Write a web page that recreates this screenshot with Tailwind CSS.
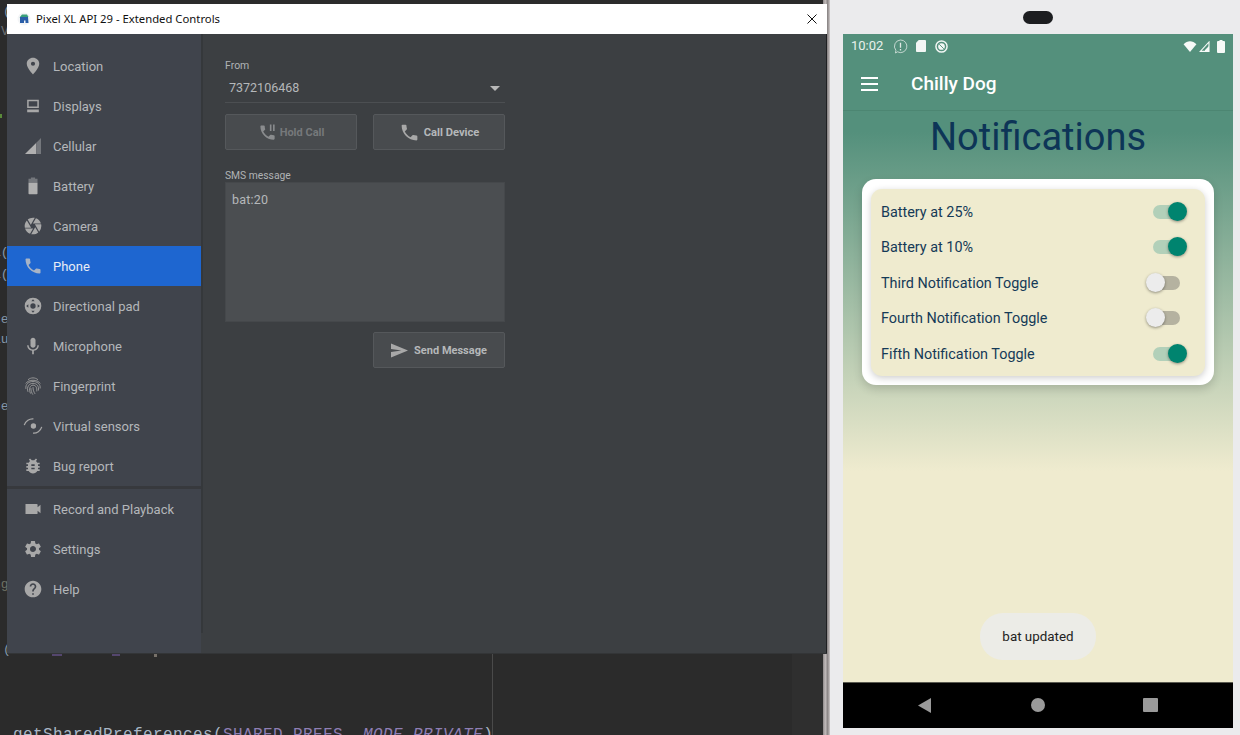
<!DOCTYPE html>
<html>
<head>
<meta charset="utf-8">
<script src="https://cdn.jsdelivr.net/npm/@tailwindcss/browser@4"></script>
</head>
<body class="w-[1240px] h-[735px] overflow-hidden bg-[#2b2b2b] relative font-['Roboto',sans-serif]">
<!-- IDE behind -->
<div class="absolute left-[13px] top-[725px] text-[16px] leading-[20px] tracking-[0.4px] font-['Liberation_Mono',monospace] text-[#a9b7c6] whitespace-nowrap">getSharedPreferences(<span class="text-[#8f7fb5]">SHARED_PREFS</span>, <span class="italic text-[#8f7fb5]">MODE_PRIVATE</span>)</div>
<div class="absolute left-[-3px] top-0 w-[40px] h-[735px] font-['Liberation_Mono',monospace] text-[13px] leading-[18px] text-[#8496a8]">
  <span class="absolute left-[6px] top-[3px]">(</span>
  <span class="absolute left-[4px] top-[23px] text-[#6b6f73]">V</span>
  <span class="absolute left-[-4px] top-[244px]"><span class="text-[#b8b8a8]">l</span>(</span>
  <span class="absolute left-[-4px] top-[266px]"><span class="text-[#b8b8a8]">l</span>(</span>
  <span class="absolute left-[-4px] top-[311px]"><span class="text-[#a08a6a]">c</span>e</span>
  <span class="absolute left-[-4px] top-[331px]"><span class="text-[#b8b8a8]">l</span>u</span>
  <span class="absolute left-[-4px] top-[398px]"><span class="text-[#a08a6a]">c</span>e</span>
  <span class="absolute left-[-4px] top-[576px] text-[#6f7266]">ng</span>
  <span class="absolute left-[6px] top-[641px]">(</span>
</div>
<div class="absolute left-0 top-[114px] w-[2px] h-[4px] bg-[#5a8a3a]"></div>
<div class="absolute left-[52px] top-[654px] w-[10px] h-[2px] bg-[#54466e]"></div>
<div class="absolute left-[112px] top-[654px] w-[8px] h-[2px] bg-[#54466e]"></div>
<div class="absolute left-[154px] top-[654px] w-[3px] h-[3px] bg-[#77716a]"></div>
<div class="absolute left-[492px] top-[654px] w-px h-[81px] bg-[#4a4a4a]"></div>
<div class="absolute left-[792px] top-[654px] w-[31px] h-[81px] bg-[#2f2f2f]"></div>
<div class="absolute left-[823px] top-0 w-[7px] h-[735px] bg-[linear-gradient(to_right,#8f8a8a,#c0baba,#8a8585,#cfcaca)]"></div>

<!-- Extended controls window -->
<div class="absolute left-[7px] top-[4px] w-[820px] h-[650px] flex flex-col bg-[#3c3f42] border-b border-b-[#333537]">
  <div class="h-[30px] shrink-0 bg-white flex items-center pl-[10px] pr-[10px] text-[11.3px] text-[#111]">
    <svg class="w-[14px] h-[14px] mr-[5px]" viewBox="0 0 14 14"><circle cx="7" cy="7" r="6.500" fill="#f3f5f7"/><path d="M2.500 5.500 5 2.500h5l1.500 2.500z" fill="#3aa07a"/><path d="M3 5h8l.5 6h-3V8.500h-1.500V11H3z" fill="#2a5ea8"/></svg>
    <span class="font-['Noto_Sans',sans-serif]">Pixel XL API 29 - Extended Controls</span>
    <svg class="ml-auto w-[10px] h-[10px]" viewBox="0 0 10 10"><path d="M.500.500 9.500 9.500M9.500.500 .500 9.500" stroke="#111" stroke-width="1"/></svg>
  </div>
  <div class="flex flex-1 min-h-0 border-r border-r-[#1f2022]">
    <aside class="w-[194px] shrink-0 bg-[#40444c] pt-[12px] text-[13px] text-[#b4b7ba] flex flex-col">
      <div class="h-[40px] flex items-center">
        <svg class="w-[20px] h-[20px] ml-[16px] mr-[10px]" viewBox="0 0 24 24" fill="#a8a8a8"><path d="M12 2C8.100 2 4.500 5.100 4.500 9.200 4.500 14.500 12 22 12 22s7.500-7.500 7.500-12.800C19.500 5.100 15.900 2 12 2zm0 9.800a2.500 2.500 0 1 1 0-5 2.500 2.500 0 0 1 0 5z"/></svg>
        <span class="pt-[2px]">Location</span></div>
      <div class="h-[40px] flex items-center">
        <svg class="w-[20px] h-[20px] ml-[16px] mr-[10px]" viewBox="0 0 24 24" fill="#a8a8a8"><path fill-rule="evenodd" d="M5 4.500h14v10H5zM6.800 6.300v6.400h10.400V6.300z"/><path d="M5 16.200h14v3.300H5z"/></svg>
        <span class="pt-[2px]">Displays</span></div>
      <div class="h-[40px] flex items-center">
        <svg class="w-[20px] h-[20px] ml-[16px] mr-[10px]" viewBox="0 0 24 24"><path d="M2.400 21.600 16 8v13.600z" fill="#b0b0b0"/><path d="M16 8l5.600-5.600v19.200H16z" fill="#74777c"/></svg>
        <span class="pt-[2px]">Cellular</span></div>
      <div class="h-[40px] flex items-center">
        <svg class="w-[20px] h-[20px] ml-[16px] mr-[10px]" viewBox="0 0 24 24"><path d="M9.500 1.800h5v1.500h2.900v4.700H6.600V3.300h2.900z" fill="#74777c"/><path d="M6.600 8h10.800v13a1 1 0 0 1-1 1H7.600a1 1 0 0 1-1-1z" fill="#b0b0b0"/></svg>
        <span class="pt-[2px]">Battery</span></div>
      <div class="h-[40px] flex items-center">
        <svg class="w-[20px] h-[20px] ml-[16px] mr-[10px]" viewBox="0 0 24 24" fill="#a8a8a8"><path d="M9.400 10.500l4.770-8.260A10 10 0 0 0 12 2c-2.400 0-4.600.85-6.320 2.260l3.660 6.340.06-.1zM21.540 9c-.92-2.920-3.150-5.260-6-6.340L11.880 9h9.660zm.26 1h-7.490l.29.500 4.760 8.250A9.900 9.900 0 0 0 22 12c0-.69-.07-1.350-.2-2zM8.540 12l-3.900-6.750A9.960 9.960 0 0 0 2.200 14h7.490l-1.150-2zm-6.080 3c.92 2.920 3.150 5.260 6 6.340L12.120 15H2.460zm11.270 0l-3.900 6.760A10 10 0 0 0 12 22c2.400 0 4.600-.85 6.320-2.260l-3.660-6.340-.93 1.600z"/></svg>
        <span class="pt-[2px]">Camera</span></div>
      <div class="h-[40px] flex items-center bg-[#1e66d0] text-[#e8edf5]">
        <svg class="w-[20px] h-[20px] ml-[16px] mr-[10px]" viewBox="0 0 24 24" fill="#a8b4c6"><path d="M6.620 10.790c1.440 2.830 3.760 5.140 6.590 6.590l2.200-2.200c.27-.27.67-.36 1.020-.24 1.120.37 2.330.57 3.570.57.550 0 1 .45 1 1V20c0 .550-.45 1-1 1C10.610 21 3 13.390 3 4c0-.550.45-1 1-1h3.500c.550 0 1 .45 1 1 0 1.250.2 2.450.57 3.570.11.350.03.740-.25 1.020l-2.200 2.200z"/></svg>
        <span class="pt-[2px]">Phone</span></div>
      <div class="h-[40px] flex items-center">
        <svg class="w-[20px] h-[20px] ml-[16px] mr-[10px]" viewBox="0 0 24 24"><circle cx="12" cy="12" r="10" fill="#a8a8a8"/><circle cx="12" cy="12" r="3.200" fill="#40444c"/><path d="M12 3.800l2 2.600h-4zM12 20.200l2-2.600h-4zM3.800 12l2.600-2v4zM20.200 12l-2.600-2v4z" fill="#40444c"/></svg>
        <span class="pt-[2px]">Directional pad</span></div>
      <div class="h-[40px] flex items-center">
        <svg class="w-[20px] h-[20px] ml-[16px] mr-[10px]" viewBox="0 0 24 24" fill="#a8a8a8"><path d="M12 14c1.660 0 3-1.340 3-3V5c0-1.660-1.340-3-3-3S9 3.340 9 5v6c0 1.660 1.340 3 3 3z"/><path d="M17.300 11c0 3-2.540 5.100-5.300 5.100S6.700 14 6.700 11H5c0 3.420 2.720 6.230 6 6.720V22h2v-4.280c3.280-.48 6-3.300 6-6.720h-1.700z"/></svg>
        <span class="pt-[2px]">Microphone</span></div>
      <div class="h-[40px] flex items-center">
        <svg class="w-[20px] h-[20px] ml-[16px] mr-[10px]" viewBox="0 0 24 24" fill="none" stroke="#9a9a9a" stroke-width="1.100"><path d="M6 4.500C9.500 1.500 14.500 1.500 18 4.500M3.300 9C6.500 3.800 17.500 3.800 20.700 9M3.500 15.500C2.500 9.500 7.500 6.500 12 6.500s9.500 3 8.500 8.500M6 19C4 13 7.500 8.800 12 8.800s7.500 3.500 6.500 8.700M9 21C6.500 15.500 8.500 11 12 11s5 3 4.500 7.500M12 13.300c0 3.200 1 6 2.500 8.200M9.500 14.500c0 3 .8 5.800 2.300 7.800"/></svg>
        <span class="pt-[2px]">Fingerprint</span></div>
      <div class="h-[40px] flex items-center">
        <svg class="w-[20px] h-[20px] ml-[16px] mr-[10px]" viewBox="0 0 24 24" fill="none" stroke="#a8a8a8" stroke-width="1.500"><circle cx="12.500" cy="12" r="3.200" fill="#a8a8a8" stroke="none"/><path d="M1.500 11C3 6 8 3 12.500 3.500M22.500 13C21 18 16.500 21 12 20.500"/></svg>
        <span class="pt-[2px]">Virtual sensors</span></div>
      <div class="h-[40px] flex items-center">
        <svg class="w-[20px] h-[20px] ml-[16px] mr-[10px]" viewBox="0 0 24 24" fill="#a8a8a8"><path d="M20 8h-2.810c-.45-.78-1.070-1.450-1.820-1.960L17 4.410 15.590 3l-2.170 2.170a6 6 0 0 0-2.830 0L8.410 3 7 4.410l1.620 1.630C7.880 6.550 7.260 7.220 6.810 8H4v2h2.090c-.05.330-.09.660-.09 1v1H4v2h2v1c0 .340.040.670.09 1H4v2h2.810c1.040 1.790 2.970 3 5.190 3s4.150-1.210 5.190-3H20v-2h-2.090c.05-.33.090-.66.090-1v-1h2v-2h-2v-1c0-.340-.04-.67-.09-1H20V8zm-6 8h-4v-2h4v2zm0-4h-4v-2h4v2z"/></svg>
        <span class="pt-[2px]">Bug report</span></div>
      <div class="h-[3px] bg-[#37393d] shrink-0"></div>
      <div class="h-[40px] flex items-center">
        <svg class="w-[20px] h-[20px] ml-[16px] mr-[10px]" viewBox="0 0 24 24" fill="#a8a8a8"><path d="M3 6h13.500a1 1 0 0 1 1 1v3l3.500-3v10l-3.500-3v3a1 1 0 0 1-1 1H3z"/></svg>
        <span class="pt-[2px]">Record and Playback</span></div>
      <div class="h-[40px] flex items-center">
        <svg class="w-[20px] h-[20px] ml-[16px] mr-[10px]" viewBox="0 0 24 24" fill="#a8a8a8"><path d="M19.140 12.940c.04-.3.060-.61.060-.94 0-.32-.02-.64-.07-.94l2.030-1.580a.490.490 0 0 0 .12-.61l-1.920-3.320a.488.488 0 0 0-.59-.22l-2.390.96c-.5-.38-1.030-.7-1.620-.94l-.36-2.540a.484.484 0 0 0-.48-.41h-3.840c-.24 0-.43.170-.47.410l-.36 2.540c-.59.240-1.130.57-1.620.94l-2.390-.96c-.22-.08-.47 0-.59.220L2.740 8.870c-.12.210-.08.470.12.610l2.030 1.580c-.05.300-.09.630-.09.940s.02.640.07.940l-2.030 1.580a.490.490 0 0 0-.12.610l1.920 3.320c.12.220.37.290.59.220l2.390-.96c.5.380 1.030.7 1.620.94l.36 2.540c.05.240.24.410.48.410h3.840c.24 0 .44-.17.470-.41l.36-2.540c.59-.24 1.130-.56 1.620-.94l2.390.96c.22.080.47 0 .59-.22l1.920-3.320c.12-.22.070-.47-.12-.61l-2.010-1.580zM12 15.600A3.610 3.610 0 0 1 8.400 12c0-1.980 1.620-3.600 3.600-3.600s3.600 1.620 3.600 3.600-1.620 3.600-3.600 3.600z"/></svg>
        <span class="pt-[2px]">Settings</span></div>
      <div class="h-[40px] flex items-center">
        <svg class="w-[20px] h-[20px] ml-[16px] mr-[10px]" viewBox="0 0 24 24" fill="#a8a8a8"><path d="M12 2C6.480 2 2 6.480 2 12s4.480 10 10 10 10-4.480 10-10S17.520 2 12 2zm1 17h-2v-2h2v2zm2.070-7.750l-.9.920C13.450 12.900 13 13.500 13 15h-2v-.5c0-1.100.45-2.100 1.170-2.830l1.240-1.260c.37-.36.590-.86.590-1.410 0-1.100-.9-2-2-2s-2 .9-2 2H8c0-2.210 1.790-4 4-4s4 1.790 4 4c0 .88-.36 1.680-.93 2.250z"/></svg>
        <span class="pt-[2px]">Help</span></div>
    </aside>
    <div class="w-[2px] h-[599px] shrink-0 bg-[#35383b]"></div>
    <main class="flex-1 pl-[22px] pt-[26px] text-[#b5b8ba]">
      <div class="w-[280px] flex flex-col">
        <div class="text-[10.5px] leading-[12px] text-[#b0b3b5]">From</div>
        <div class="h-[26px] mt-[5px] pb-[2px] flex items-center justify-between border-b border-[#4c4f52] pl-[4px] pr-[5px] text-[12.5px]">
          <span>7372106468</span>
          <span class="w-0 h-0 border-l-[5px] border-r-[5px] border-t-[5px] border-l-transparent border-r-transparent border-t-[#b8b8b8]"></span>
        </div>
        <div class="flex justify-between mt-[11px]">
          <div class="w-[132px] h-[36px] flex items-center justify-center gap-[3px] bg-[#484b4e] border border-[#55585b] rounded-[2px] text-[11px] font-bold text-[#76797b]">
            <svg class="w-[19px] h-[19px]" viewBox="0 0 24 24" fill="#8a8c8e"><path d="M6.620 10.790c1.440 2.830 3.760 5.140 6.590 6.590l2.200-2.200c.27-.27.67-.36 1.020-.24 1.120.37 2.330.57 3.570.57.550 0 1 .45 1 1V20c0 .550-.45 1-1 1C10.610 21 3 13.390 3 4c0-.550.45-1 1-1h3.500c.550 0 1 .45 1 1 0 1.250.2 2.450.57 3.570.11.350.03.740-.25 1.020l-2.200 2.200z"/><path d="M15 2h2v8h-2zM19 2h2v8h-2z"/></svg>
            <span class="pt-[2px]">Hold Call</span></div>
          <div class="w-[132px] h-[36px] flex items-center justify-center gap-[4px] bg-[#484b4e] border border-[#55585b] rounded-[2px] text-[11.200px] font-bold text-[#b5b8ba]">
            <svg class="w-[21px] h-[21px]" viewBox="0 0 24 24" fill="#a8a8a8"><path d="M6.620 10.790c1.440 2.830 3.760 5.140 6.590 6.590l2.200-2.200c.27-.27.67-.36 1.020-.24 1.120.37 2.330.57 3.570.57.550 0 1 .45 1 1V20c0 .550-.45 1-1 1C10.610 21 3 13.390 3 4c0-.550.45-1 1-1h3.500c.550 0 1 .45 1 1 0 1.250.2 2.450.57 3.570.11.350.03.740-.25 1.020l-2.200 2.200z"/></svg>
            <span class="pt-[2px]">Call Device</span></div>
        </div>
        <div class="text-[10.3px] leading-[12px] mt-[20px] text-[#b0b3b5]">SMS message</div>
        <div class="h-[140px] bg-[#4b4e51] border border-[#45484b] px-[6px] pt-[9px] text-[12.5px] leading-[16px] tracking-[0.2px]">bat:20</div>
        <div class="flex justify-end mt-[10px]">
          <div class="w-[132px] h-[36px] flex items-center justify-center gap-[6px] bg-[#484b4e] border border-[#55585b] rounded-[2px] text-[11px] font-bold text-[#b5b8ba]">
            <svg class="w-[17px] h-[15px]" viewBox="0 0 18 15" fill="#a8a8a8"><path d="M0 0l18 7.500L0 15V9l11-1.500L0 6z"/></svg>
            <span class="pt-[2px]">Send Message</span></div>
        </div>
      </div>
    </main>
  </div>
</div>

<!-- Emulator -->
<div class="absolute left-[830px] top-0 w-[410px] h-[735px] bg-[#ebebed] flex flex-col">
  <div class="h-[34px] shrink-0 flex items-center justify-center pl-[5px]"><div class="w-[30px] h-[13px] rounded-full bg-[#1c1d20]"></div></div>
  <div class="ml-[13px] w-[390px] h-[694px] flex flex-col relative bg-[#efebcf] overflow-hidden">
    <div class="h-[77px] shrink-0 bg-[#54907c] border-b border-[#4c8672] flex flex-col text-white">
      <div class="h-[24px] flex items-center pl-[8px] pr-[8px] text-[13px] text-[#e8f0ec]">
        <span class="mr-[10px]">10:02</span>
        <svg class="w-[15px] h-[15px] mr-[8px]" viewBox="0 0 15 15" fill="none" stroke="#dfe9e4" stroke-width="0.800"><path d="M7.500 1a6.300 6.300 0 1 1-3 11.800L2.500 14l.4-2.700A6.300 6.300 0 0 1 7.500 1z"/><path d="M7.500 3.800v5M7.500 10v1.500" stroke-width="1.300"/></svg>
        <svg class="w-[10px] h-[12px] mr-[9px]" viewBox="0 0 11 13" fill="#f2f6f4"><path d="M3 0h7a1 1 0 0 1 1 1v11a1 1 0 0 1-1 1H1a1 1 0 0 1-1-1V3z"/></svg>
        <svg class="w-[13px] h-[13px]" viewBox="0 0 14 14"><circle cx="7" cy="7" r="6" fill="none" stroke="#f2f6f4" stroke-width="1.600"/><circle cx="7" cy="7" r="3.600" fill="#f2f6f4"/><path d="M4.500 4.500l5 5" stroke="#54907c" stroke-width="1"/></svg>
        <svg class="ml-auto w-[14px] h-[11px] mr-[2px]" viewBox="0 0 14 12" fill="#f7faf8"><path d="M0 3.500C4-.8 10-.8 14 3.500L7 12z"/></svg>
        <svg class="w-[11px] h-[11px] mr-[7px]" viewBox="0 0 11 11" fill="none" stroke="#f7faf8" stroke-width="1.100"><path d="M10 1v9.400H1.300z"/><path d="M10 5v5.400H6V9z" fill="#f7faf8" stroke="none"/></svg>
        <svg class="w-[8px] h-[13px]" viewBox="0 0 8 13" fill="#f7faf8"><path d="M2.500 0h3v1H7a1 1 0 0 1 1 1v10a1 1 0 0 1-1 1H1a1 1 0 0 1-1-1V2a1 1 0 0 1 1-1h1.500z"/></svg>
      </div>
      <div class="flex-1 flex items-center pl-[18px]">
        <div class="w-[17px] flex flex-col gap-[4.500px] mr-[33px]"><i class="block h-[1.500px] bg-white"></i><i class="block h-[1.500px] bg-white"></i><i class="block h-[1.500px] bg-white"></i></div>
        <span class="text-[19px] font-medium text-white pt-px">Chilly Dog</span>
      </div>
    </div>
    <div class="flex-1 flex flex-col bg-[linear-gradient(to_bottom,#54907c_21px,#efebcf_360px)]">
      <h1 class="text-[38px] leading-[52px] text-[#0d3557] text-center">Notifications</h1>
      <div class="mt-[16px] mx-[19px] h-[206px] bg-white rounded-[14px] pl-[9px] pr-[9px] pt-[10px] shadow-[0_4px_10px_rgba(0,0,0,0.16)]">
        <div class="h-[187px] bg-[#efebcf] rounded-[11px] shadow-[0_2px_7px_rgba(0,0,0,0.2)] flex flex-col justify-center pl-[10px] pr-[19px] text-[14.400px] text-[#153a57]">
          <div class="h-[35.500px] flex items-center justify-between"><span class="pt-[2px]">Battery at 25%</span>
            <div class="relative w-[33px] h-[14px] rounded-full bg-[#b2d0b9]"><div class="absolute -right-[1px] -top-[3px] w-[19px] h-[19px] rounded-full bg-[#00846f] shadow-[0_1px_3px_rgba(0,0,0,0.4)]"></div></div></div>
          <div class="h-[35.500px] flex items-center justify-between"><span class="pt-[2px]">Battery at 10%</span>
            <div class="relative w-[33px] h-[14px] rounded-full bg-[#b2d0b9]"><div class="absolute -right-[1px] -top-[3px] w-[19px] h-[19px] rounded-full bg-[#00846f] shadow-[0_1px_3px_rgba(0,0,0,0.4)]"></div></div></div>
          <div class="h-[35.500px] flex items-center justify-between"><span class="pt-[2px]">Third Notification Toggle</span>
            <div class="relative w-[33px] h-[14px] rounded-full bg-[#b5b2a0] mr-[6px]"><div class="absolute -left-[1px] -top-[3px] w-[19px] h-[19px] rounded-full bg-[#ececec] shadow-[0_1px_3px_rgba(0,0,0,0.4)]"></div></div></div>
          <div class="h-[35.500px] flex items-center justify-between"><span class="pt-[2px]">Fourth Notification Toggle</span>
            <div class="relative w-[33px] h-[14px] rounded-full bg-[#b5b2a0] mr-[6px]"><div class="absolute -left-[1px] -top-[3px] w-[19px] h-[19px] rounded-full bg-[#ececec] shadow-[0_1px_3px_rgba(0,0,0,0.4)]"></div></div></div>
          <div class="h-[35.500px] flex items-center justify-between"><span class="pt-[2px]">Fifth Notification Toggle</span>
            <div class="relative w-[33px] h-[14px] rounded-full bg-[#b2d0b9]"><div class="absolute -right-[1px] -top-[3px] w-[19px] h-[19px] rounded-full bg-[#00846f] shadow-[0_1px_3px_rgba(0,0,0,0.4)]"></div></div></div>
        </div>
      </div>
      <div class="mt-auto mb-[22px] self-center w-[116px] h-[47px] pt-px rounded-[23px] bg-[#ecece7] flex items-center justify-center text-[13.400px] text-[#222]">bat updated</div>
    </div>
    <div class="h-[46px] shrink-0 bg-black border-t border-[#5a5a50] flex items-center">
      <svg class="absolute left-[75px] bottom-[15px] w-[13px] h-[15px]" viewBox="0 0 14 16" fill="#9a9a9a"><path d="M14 0v16L0 8z"/></svg>
      <div class="absolute left-[188px] bottom-[16px] w-[14px] h-[14px] rounded-full bg-[#9a9a9a]"></div>
      <div class="absolute left-[300px] bottom-[16px] w-[15px] h-[14px] rounded-[1px] bg-[#9a9a9a]"></div>
    </div>
  </div>
</div>
</body>
</html>
